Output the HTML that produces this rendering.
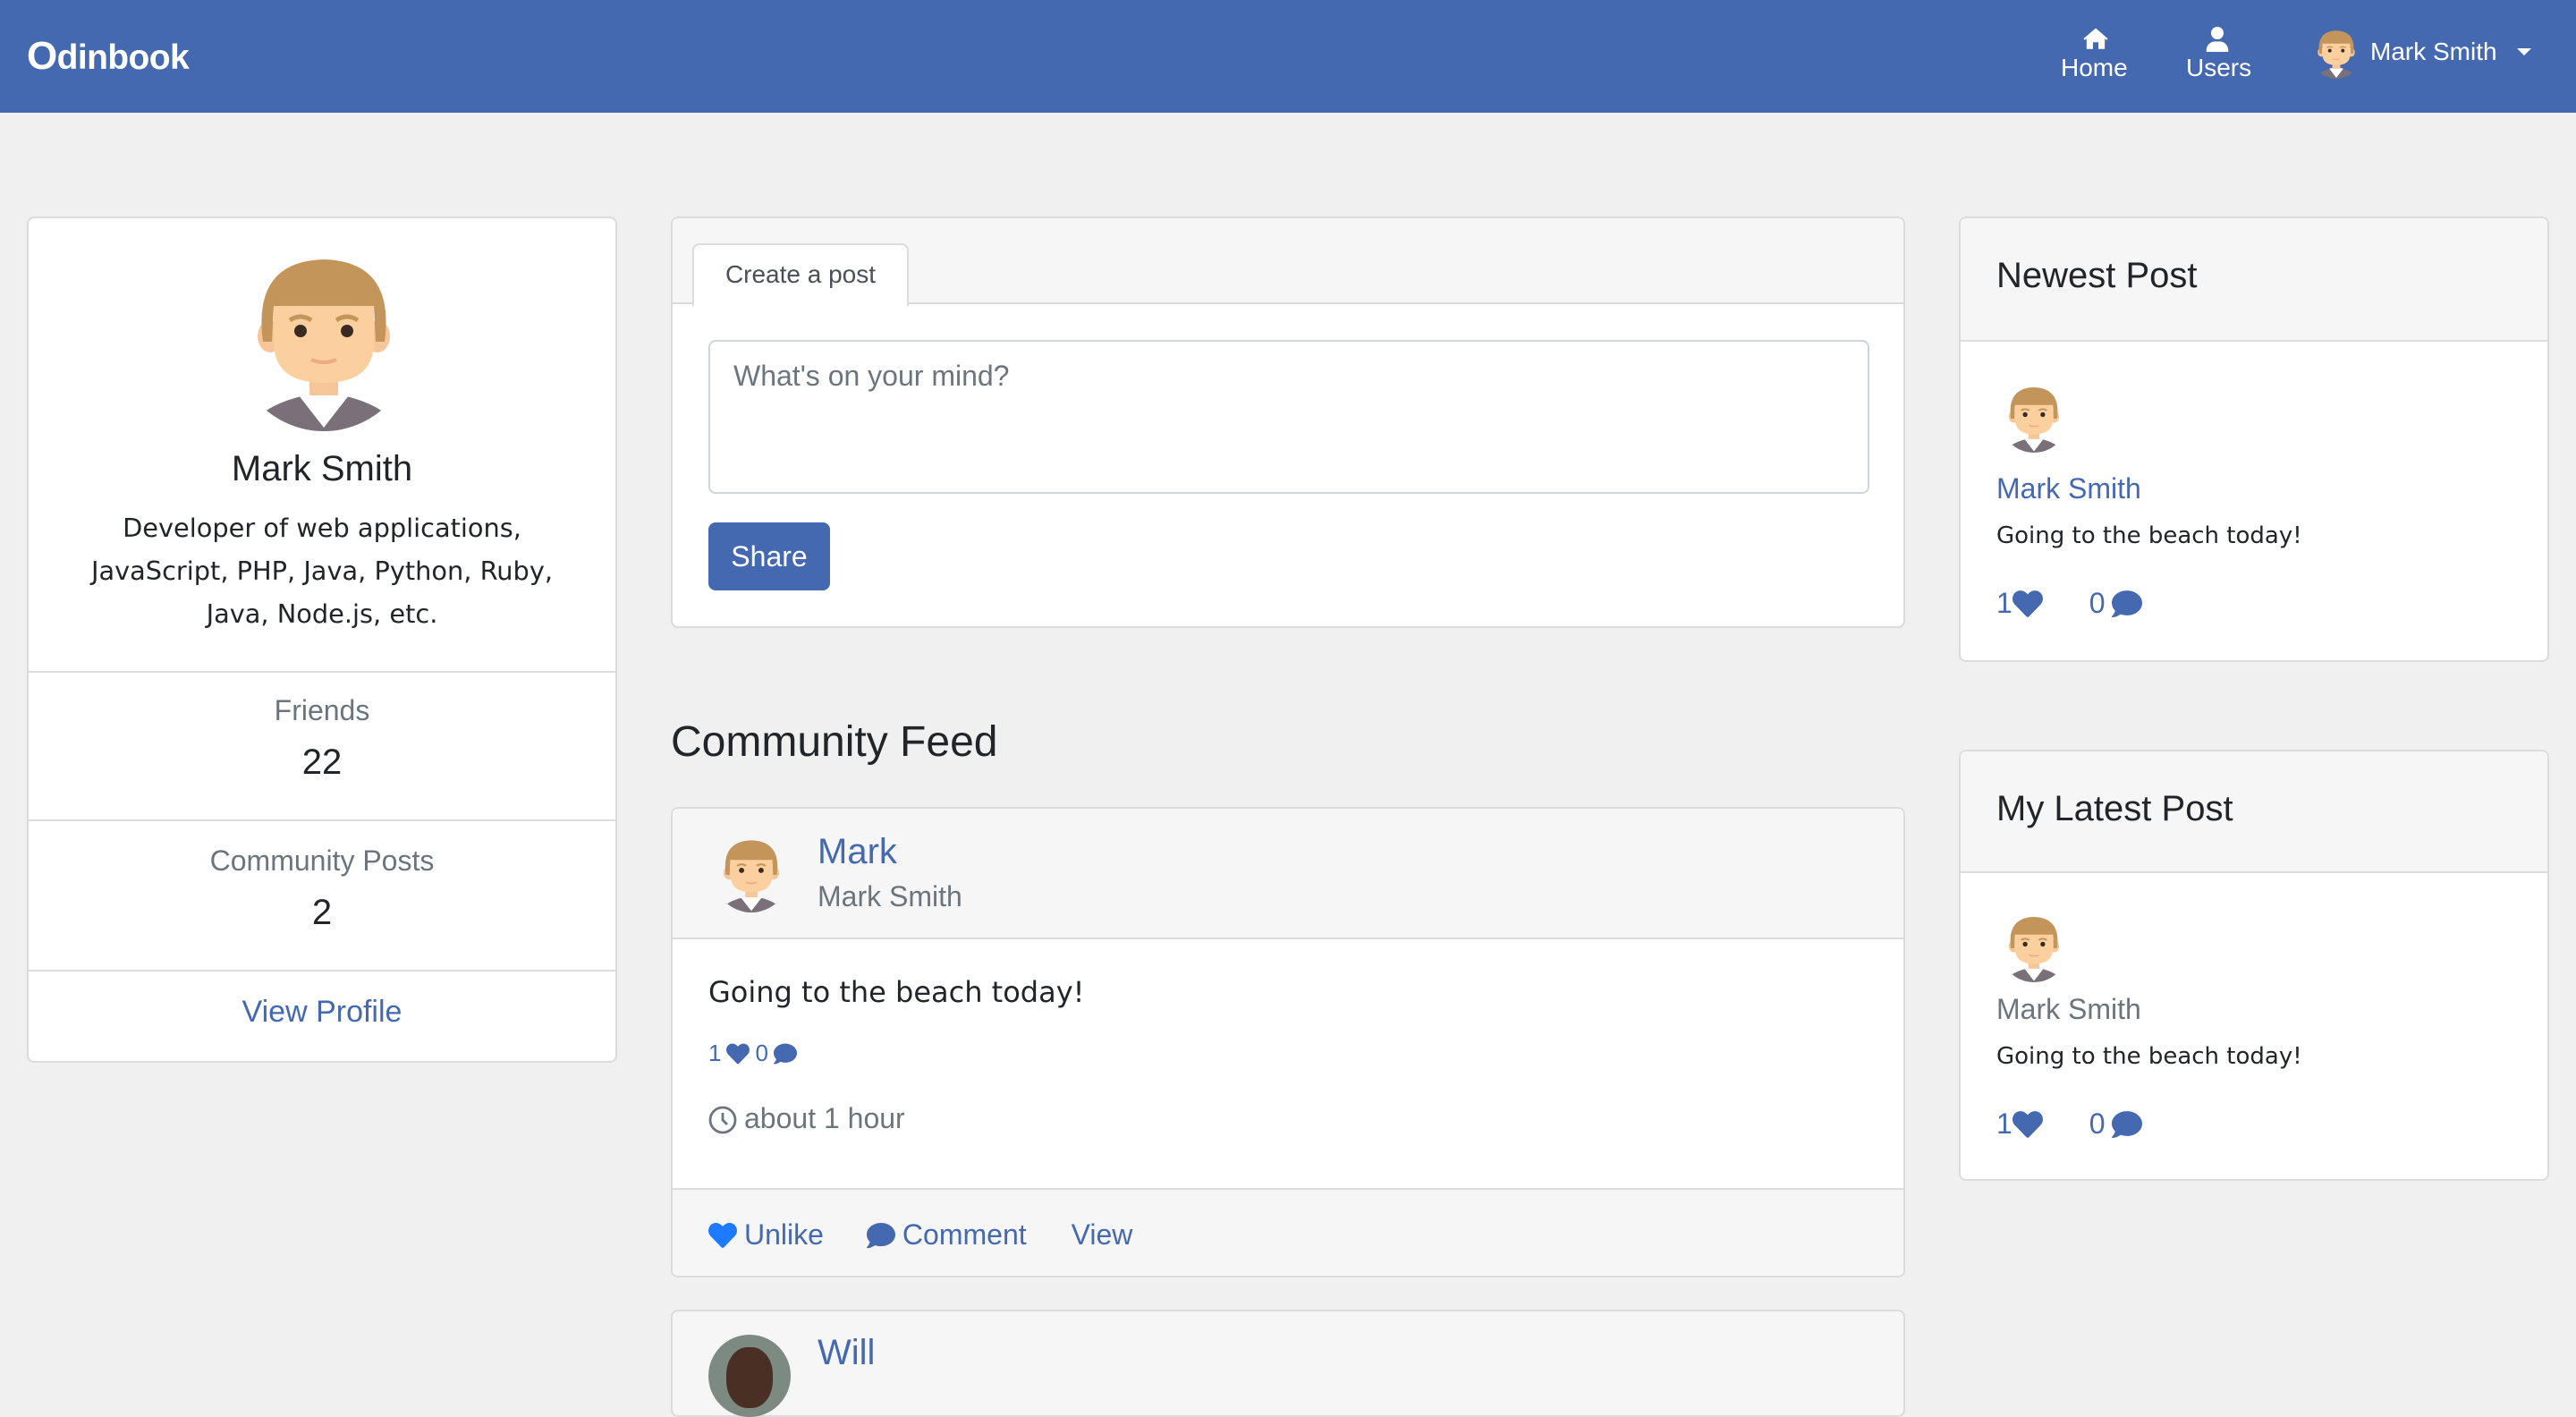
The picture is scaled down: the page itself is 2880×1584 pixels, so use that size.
<!DOCTYPE html>
<html><head><meta charset="utf-8"><style>
html{zoom:2}
*{box-sizing:border-box;margin:0;padding:0}
body{width:1440px;height:766px;background:#f0f0f0;font-family:"Liberation Sans",sans-serif;color:#212529;position:relative;overflow:hidden}
.a{position:absolute}
.nav{left:0;top:0;width:1440px;height:63px;background:#4469b0}
.card{background:#fff;border:1px solid #dcdcdc;border-radius:4px;position:absolute}
.blue{color:#4469b0}
.gray{color:#6c757d}
.v{font-family:"DejaVu Sans",sans-serif}
.c{text-align:center}
.hr{position:absolute;left:0;right:0;height:1px;background:#dcdcdc}
svg{display:block}
</style></head><body>
<svg width="0" height="0" style="position:absolute">
<defs>
<clipPath id="cc"><circle cx="50" cy="50" r="50"/></clipPath>
<symbol id="av" viewBox="0 0 100 100">
<g clip-path="url(#cc)">
<path d="M6 105 Q10 84 50 78 Q90 84 94 105Z" fill="#7a7079"/>
<path d="M36 80 L50 98 L64 80 Q50 75 36 80Z" fill="#fff"/>
<rect x="42" y="62" width="16" height="18" fill="#f6c598"/>
<ellipse cx="20" cy="47" rx="7" ry="9" fill="#f6c598"/>
<ellipse cx="80" cy="47" rx="7" ry="9" fill="#f6c598"/>
<path d="M22 22 L78 22 L78 50 Q78 73 50 73 Q22 73 22 50Z" fill="#fccf9f"/>
<path d="M16 50 Q10 5 50 4 Q90 5 84 50 L79 50 L78 30 L22 30 L21 50Z" fill="#c4955a"/>
<circle cx="37" cy="44" r="3.5" fill="#3a2a22"/><circle cx="63" cy="44" r="3.5" fill="#3a2a22"/>
<path d="M31 38 Q37 34 43 38 M57 38 Q63 34 69 38" stroke="#c4955a" stroke-width="2.5" fill="none"/>
<path d="M43 60 Q50 63 57 60" stroke="#f0a888" stroke-width="2" fill="none"/>
</g>
</symbol>
<symbol id="heart" viewBox="0 0 512 512"><path d="M462 62c-55-47-136-38-187 14l-19 20-19-20C186 24 104 15 50 62c-63 54-66 150-10 208l193 199c12 13 33 13 45 0l193-199c57-58 54-154-9-208z"/></symbol>
<symbol id="bub" viewBox="0 0 512 512"><path d="M256 32C115 32 0 125 0 240c0 49 21 95 57 131-12 51-55 96-55 97-3 2-3 6-2 9 1 3 4 5 8 5 66 0 116-32 140-51 32 12 68 19 108 19 141 0 256-93 256-208S397 32 256 32z"/></symbol>
</defs></svg>

<div class="a nav"></div>
<div class="a" style="left:15px;top:19px;color:#fff;font-size:19.5px;font-weight:bold;letter-spacing:-0.3px"><span style="font-size:22px">O</span>dinbook</div>
<svg class="a" style="left:1164px;top:15px" width="15" height="13" viewBox="0 0 576 512" fill="#fff"><path d="M288 30L20 260l30 30 38-32v230h140V340h120v148h140V258l38 32 30-30z"/></svg>
<div class="a" style="left:1152px;top:30px;color:#fff;font-size:14px">Home</div>
<svg class="a" style="left:1233px;top:15px" width="13" height="14" viewBox="0 0 448 512" fill="#fff"><circle cx="224" cy="128" r="128"/><path d="M0 480c0-100 80-180 180-180h88c100 0 180 80 180 180v32H0z"/></svg>
<div class="a" style="left:1222px;top:30px;color:#fff;font-size:14px">Users</div>
<svg class="a" style="left:1292px;top:14px" width="28" height="32"><use href="#av"/></svg>
<div class="a" style="left:1325px;top:21px;color:#fff;font-size:14px">Mark Smith</div>
<div class="a" style="left:1407px;top:27px;border-left:4px solid transparent;border-right:4px solid transparent;border-top:4px solid #fff"></div>

<!-- left card -->
<div class="card" style="left:15px;top:121px;width:330px;height:473px">
 <svg class="a" style="left:115px;top:18px" width="100" height="102"><use href="#av"/></svg>
 <div class="a c" style="left:0;right:0;top:129px;font-size:20px">Mark Smith</div>
 <div class="a c v" style="left:20px;right:20px;top:161px;font-size:14.4px;line-height:24px">Developer of web applications, JavaScript, PHP, Java, Python, Ruby, Java, Node.js, etc.</div>
 <div class="hr" style="top:253px"></div>
 <div class="a c gray" style="left:0;right:0;top:266px;font-size:16px">Friends</div>
 <div class="a c" style="left:0;right:0;top:293px;font-size:20px">22</div>
 <div class="hr" style="top:336px"></div>
 <div class="a c gray" style="left:0;right:0;top:350px;font-size:16px">Community Posts</div>
 <div class="a c" style="left:0;right:0;top:377px;font-size:20px">2</div>
 <div class="hr" style="top:420px"></div>
 <div class="a c blue" style="left:0;right:0;top:434px;font-size:17px">View Profile</div>
</div>

<!-- create post -->
<div class="card" style="left:375px;top:121px;width:690px;height:230px;background:#fff">
 <div class="a" style="left:0;top:0;right:0;height:48px;background:#f6f6f6;border-radius:4px 4px 0 0;border-bottom:1px solid #dcdcdc"></div>
 <div class="a" style="left:11px;top:14px;width:121px;height:35px;background:#fff;border:1px solid #dcdcdc;border-bottom:none;border-radius:4px 4px 0 0;font-size:14px;text-align:center;line-height:33px;color:#495057">Create a post</div>
 <div class="a" style="left:20px;top:68px;width:649px;height:86px;border:1px solid #ced4da;border-radius:4px;padding:10px 13px;color:#6c757d;font-size:16px">What's on your mind?</div>
 <div class="a" style="left:20px;top:170px;width:68px;height:38px;background:#4469b0;border-radius:4px;color:#fff;font-size:16px;text-align:center;line-height:38px">Share</div>
</div>

<div class="a" style="left:375px;top:401px;font-size:24px">Community Feed</div>

<!-- post -->
<div class="card" style="left:375px;top:451px;width:690px;height:263px">
 <div class="a" style="left:0;top:0;right:0;height:73px;background:#f6f6f6;border-bottom:1px solid #dcdcdc;border-radius:4px 4px 0 0"></div>
 <svg class="a" style="left:23px;top:12px" width="42" height="50"><use href="#av"/></svg>
 <div class="a blue" style="left:81px;top:13px;font-size:20px">Mark</div>
 <div class="a gray" style="left:81px;top:40px;font-size:16px">Mark Smith</div>
 <div class="a v" style="left:20px;top:93px;font-size:16px">Going to the beach today!</div>
 <div class="a blue" style="left:20px;top:129px;font-size:13px;display:flex;align-items:center;gap:3px">1 <svg width="13" height="13" fill="#4469b0"><use href="#heart"/></svg> 0 <svg width="13" height="13" fill="#4469b0"><use href="#bub"/></svg></div>
 <svg class="a" style="left:20px;top:166px" width="16" height="16" viewBox="0 0 16 16"><circle cx="8" cy="8" r="7" fill="none" stroke="#6c757d" stroke-width="1.4"/><path d="M8 4v4l2.5 2.5" stroke="#6c757d" stroke-width="1.4" fill="none"/></svg>
 <div class="a gray" style="left:40px;top:164px;font-size:16px">about 1 hour</div>
 <div class="a" style="left:0;right:0;bottom:0;height:49px;background:#f6f6f6;border-top:1px solid #dcdcdc;border-radius:0 0 4px 4px"></div>
 <div class="a blue" style="left:20px;top:229px;font-size:16px;display:flex;align-items:center"><svg width="16" height="16" fill="#1e7bff" style="margin-right:4px"><use href="#heart"/></svg>Unlike<svg width="16" height="16" fill="#4469b0" style="margin:0 4px 0 24px"><use href="#bub"/></svg>Comment<span style="margin-left:25px">View</span></div>
</div>

<div class="card" style="left:375px;top:732px;width:690px;height:60px;background:#f6f6f6">
 <div class="a" style="left:20px;top:13px;width:46px;height:46px;border-radius:50%;background:#7c8a82"></div>
 <div class="a" style="left:30px;top:20px;width:26px;height:34px;border-radius:45%;background:#4a3024"></div>
 <div class="a blue" style="left:81px;top:12px;font-size:20px">Will</div>
</div>

<!-- right cards -->
<div class="card" style="left:1095px;top:121px;width:330px;height:249px">
 <div class="a" style="left:0;top:0;right:0;height:69px;background:#f6f6f6;border-bottom:1px solid #dcdcdc;border-radius:4px 4px 0 0"></div>
 <div class="a" style="left:20px;top:21px;font-size:20px">Newest Post</div>
 <svg class="a" style="left:22px;top:89px" width="38" height="46"><use href="#av"/></svg>
 <div class="a blue" style="left:20px;top:142px;font-size:16px">Mark Smith</div>
 <div class="a v" style="left:20px;top:170px;font-size:13px">Going to the beach today!</div>
 <div class="a blue" style="left:20px;top:206px;font-size:16px;display:flex;align-items:center">1<svg width="17" height="17" fill="#4469b0"><use href="#heart"/></svg><span style="margin-left:26px">0</span><svg width="18" height="17" fill="#4469b0" style="margin-left:3px"><use href="#bub"/></svg></div>
</div>
<div class="card" style="left:1095px;top:419px;width:330px;height:241px">
 <div class="a" style="left:0;top:0;right:0;height:68px;background:#f6f6f6;border-bottom:1px solid #dcdcdc;border-radius:4px 4px 0 0"></div>
 <div class="a" style="left:20px;top:21px;font-size:20px">My Latest Post</div>
 <svg class="a" style="left:22px;top:87px" width="38" height="46"><use href="#av"/></svg>
 <div class="a gray" style="left:20px;top:135px;font-size:16px">Mark Smith</div>
 <div class="a v" style="left:20px;top:163px;font-size:13px">Going to the beach today!</div>
 <div class="a blue" style="left:20px;top:199px;font-size:16px;display:flex;align-items:center">1<svg width="17" height="17" fill="#4469b0"><use href="#heart"/></svg><span style="margin-left:26px">0</span><svg width="18" height="17" fill="#4469b0" style="margin-left:3px"><use href="#bub"/></svg></div>
</div>
</body></html>
